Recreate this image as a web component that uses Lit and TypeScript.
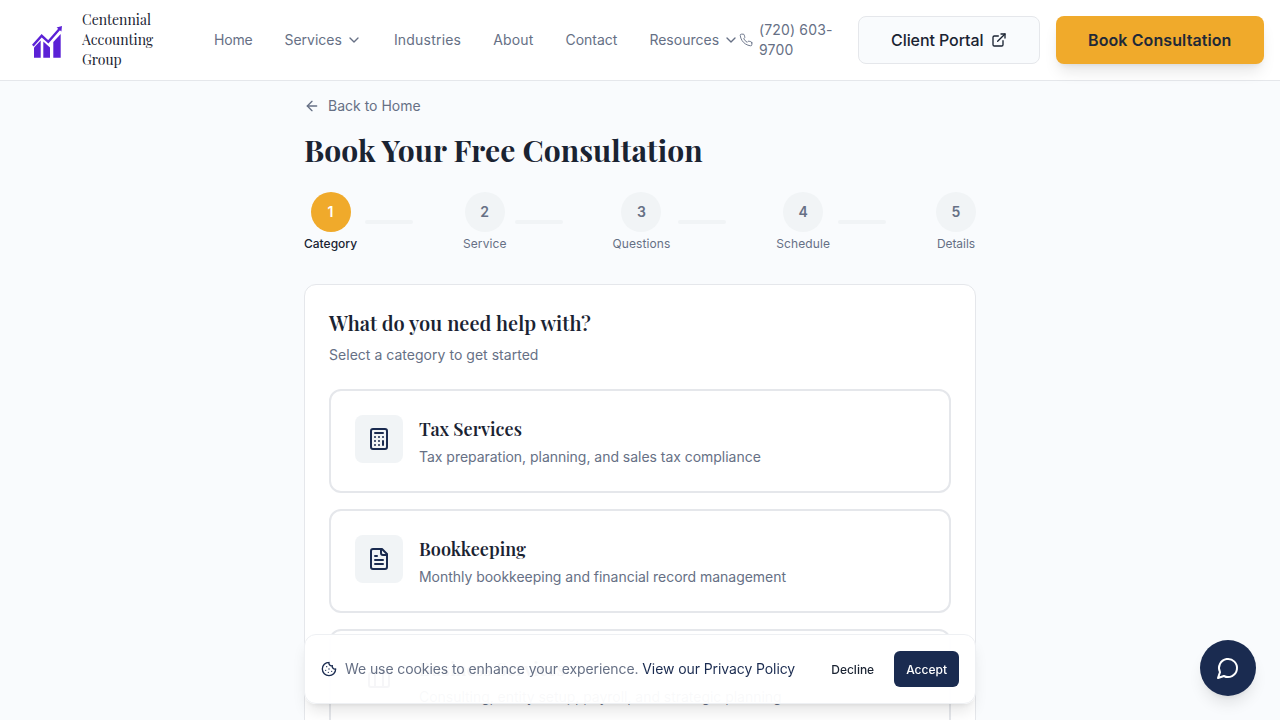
import { LitElement, html, css, svg } from "lit";
import { customElement } from "lit/decorators.js";

const icon = (paths: unknown, size = 16, sw = 2) => html`<svg class="ic" width=${size} height=${size} viewBox="0 0 24 24" fill="none" stroke="currentColor" stroke-width=${sw} stroke-linecap="round" stroke-linejoin="round">${paths}</svg>`;

const chevron = svg`<path d="m6 9 6 6 6-6"/>`;
const arrowLeft = svg`<path d="m12 19-7-7 7-7"/><path d="M19 12H5"/>`;
const phone = svg`<path d="M22 16.92v3a2 2 0 0 1-2.18 2 19.79 19.79 0 0 1-8.63-3.07 19.5 19.5 0 0 1-6-6 19.79 19.79 0 0 1-3.07-8.67A2 2 0 0 1 4.11 2h3a2 2 0 0 1 2 1.72 12.84 12.84 0 0 0 .7 2.81 2 2 0 0 1-.45 2.11L8.09 9.91a16 16 0 0 0 6 6l1.27-1.27a2 2 0 0 1 2.11-.45 12.84 12.84 0 0 0 2.81.7A2 2 0 0 1 22 16.92z"/>`;
const external = svg`<path d="M15 3h6v6"/><path d="M10 14 21 3"/><path d="M18 13v6a2 2 0 0 1-2 2H5a2 2 0 0 1-2-2V8a2 2 0 0 1 2-2h6"/>`;
const calculator = svg`<rect width="16" height="20" x="4" y="2" rx="2"/><line x1="8" x2="16" y1="6" y2="6"/><line x1="16" x2="16" y1="14" y2="18"/><path d="M16 10h.01"/><path d="M12 10h.01"/><path d="M8 10h.01"/><path d="M12 14h.01"/><path d="M8 14h.01"/><path d="M12 18h.01"/><path d="M8 18h.01"/>`;
const fileText = svg`<path d="M15 2H6a2 2 0 0 0-2 2v16a2 2 0 0 0 2 2h12a2 2 0 0 0 2-2V7Z"/><path d="M14 2v4a2 2 0 0 0 2 2h4"/><path d="M10 9H8"/><path d="M16 13H8"/><path d="M16 17H8"/>`;
const briefcase = svg`<path d="M16 20V4a2 2 0 0 0-2-2h-4a2 2 0 0 0-2 2v16"/><rect width="20" height="14" x="2" y="6" rx="2"/>`;
const cookie = svg`<path d="M12 2a10 10 0 1 0 10 10 4 4 0 0 1-5-5 4 4 0 0 1-5-5"/><path d="M8.5 8.5v.01"/><path d="M16 15.5v.01"/><path d="M12 12v.01"/><path d="M11 17v.01"/><path d="M7 14v.01"/>`;
const message = svg`<path d="M7.9 20A9 9 0 1 0 4 16.1L2 22Z"/>`;

const steps = ["Category", "Service", "Questions", "Schedule", "Details"];
const cards = [
  { t: "Tax Services", d: "Tax preparation, planning, and sales tax compliance", i: calculator },
  { t: "Bookkeeping", d: "Monthly bookkeeping and financial record management", i: fileText },
  { t: "Business Services", d: "Consulting, entity setup, payroll, and strategic planning", i: briefcase },
];
const nav = [
  { t: "Home", k: "tight" }, { t: "Services", c: 1, k: "" }, { t: "Industries", k: "wide" }, { t: "About", k: "mid" }, { t: "Contact", k: "" }, { t: "Resources", c: 1, k: "" },
];

@customElement("app-root")
export class AppRoot extends LitElement {
  static styles = css`
    :host { display: block; height: 100vh; overflow: hidden; background: #f9fbfd; font-family: Inter, "Liberation Sans", sans-serif; color: #1a2332; }
    * { box-sizing: border-box; }
    .ic { display: block; flex: none; }
    header { height: 81px; background: #fff; border-bottom: 1px solid #e5e7eb; display: flex; align-items: center; padding: 0 16px; }
    .logo { display: flex; align-items: center; gap: 20px; margin-left: 16px; flex: none; }
    .logo svg { display: block; }
    .logo-text { width: 100px; font-family: "Playfair Display", "Liberation Serif", serif; font-size: 14px; line-height: 20px; color: #1a2332; font-weight: 400; }
    nav { display: flex; align-items: center; gap: 32px; margin-left: 32px; flex: none; }
    .nl { display: flex; align-items: center; gap: 4px; font-size: 14px; line-height: 20px; color: #667085; font-weight: 400; white-space: nowrap; }
    .nl.tight { letter-spacing: -.2px; }
    .nl.wide { letter-spacing: .2px; }
    .nl.mid { letter-spacing: .15px; }
    .right { display: flex; align-items: center; margin-left: auto; }
    .phone { display: flex; align-items: center; gap: 6px; font-size: 14px; line-height: 20px; color: #667085; width: 96px; margin-right: 23px; letter-spacing: .15px; }
    .phone span { width: 76px; }
    .btn { height: 48px; border-radius: 8px; padding: 0 32px; display: flex; align-items: center; font-size: 16px; font-weight: 500; white-space: nowrap; }
    .portal { width: 182px; background: #f9fbfd; border: 1px solid #e5e7eb; gap: 8px; color: #1a2332; letter-spacing: -.08px; }
    .book { margin-left: 16px; width: 208px; background: #f0aa2b; color: #1f2937; font-weight: 600; letter-spacing: .1px; box-shadow: 0 10px 15px -3px rgba(0,0,0,.1), 0 4px 6px -4px rgba(0,0,0,.1); }
    main { width: 672px; margin: 0 auto; padding-top: 15px; }
    .back { display: flex; align-items: center; gap: 8px; font-size: 14px; line-height: 20px; color: #667085; margin-bottom: 16px; }
    h1 { margin: 0 0 24px; font-family: "Playfair Display", "Liberation Serif", serif; font-size: 30px; line-height: 36px; font-weight: 700; color: #1a2332; letter-spacing: .07px; }
    .stepper { display: flex; justify-content: space-between; margin-bottom: 32px; }
    .group { display: flex; align-items: center; }
    .step { display: flex; flex-direction: column; align-items: center; gap: 4px; }
    .circle { width: 40px; height: 40px; border-radius: 50%; background: #f1f4f6; color: #667085; display: flex; align-items: center; justify-content: center; font-size: 14px; line-height: 20px; font-weight: 600; }
    .circle.on { background: #f0aa2b; color: #fff; }
    .label { font-size: 12px; line-height: 16px; color: #667085; letter-spacing: .1px; }
    .label.on { color: #1a2332; font-weight: 500; letter-spacing: 0; }
    .label.last { letter-spacing: -.05px; }
    .line { width: 48px; height: 4px; border-radius: 2px; background: #f1f4f6; margin: 0 8px; }
    .panel { background: #fff; border: 1px solid #e5e7eb; border-radius: 12px; padding: 24px; }
    h2 { margin: 0 0 8px; font-family: "Playfair Display", "Liberation Serif", serif; font-size: 20px; line-height: 28px; font-weight: 600; color: #1a2332; letter-spacing: .04px; }
    .sub { margin: 0 0 24px; font-size: 14px; line-height: 20px; color: #667085; letter-spacing: .03px; }
    .cards { display: flex; flex-direction: column; gap: 16px; }
    .card { height: 104px; border: 2px solid #e5e7eb; border-radius: 12px; padding: 24px; display: flex; align-items: flex-start; gap: 16px; background: #fff; }
    .ibox { width: 48px; height: 48px; border-radius: 8px; background: #f1f4f6; color: #1a2b50; display: flex; align-items: center; justify-content: center; flex: none; }
    h3 { margin: 0 0 4px; font-family: "Playfair Display", "Liberation Serif", serif; font-size: 18px; line-height: 28px; font-weight: 600; color: #1a2332; letter-spacing: .04px; }
    .desc { margin: 0; font-size: 14px; line-height: 20px; color: #667085; letter-spacing: -.03px; }
    .banner { position: fixed; left: 304px; bottom: 16px; width: 672px; height: 70px; border: 1px solid #eef0f3; border-radius: 12px; background: rgba(255,255,255,.96); box-shadow: 0 10px 15px -3px rgba(0,0,0,.1), 0 4px 6px -4px rgba(0,0,0,.1); display: flex; align-items: center; padding: 0 16px; }
    .banner .ck { color: #1a2b50; margin-right: 8px; }
    .banner p { margin: 0; font-size: 14px; line-height: 20px; color: #667085; flex: 1; white-space: nowrap; letter-spacing: -.09px; }
    .banner p b { font-weight: 400; color: #1a2b50; }
    .sb { height: 36px; padding: 0 12px; border-radius: 6px; display: flex; align-items: center; font-size: 12px; font-weight: 500; color: #1a2332; }
    .sb.acc { background: #1a2b50; color: #fff; margin-left: 8px; }
    .chat { position: fixed; left: 1200px; top: 640px; width: 56px; height: 56px; border-radius: 50%; background: #1a2b50; color: #fff; display: flex; align-items: center; justify-content: center; box-shadow: 0 10px 15px -3px rgba(0,0,0,.1), 0 4px 6px -4px rgba(0,0,0,.1); }
  `;

  render() {
    return html`
      <header>
        <div class="logo">
          <svg width="30" height="40" viewBox="0 0 30 40" fill="#5b21d6">
            <path d="M2 27.5 L8.7 20.5 V37.7 H2 Z"/>
            <path d="M11.3 21.5 L18 27.5 V37.7 H11.3 Z"/>
            <path d="M21.3 22 L28.7 14 V37.7 H21.3 Z"/>
            <path d="M0.8 25.6 L9.7 15.8 L16.3 21.8 L27.5 9" fill="none" stroke="#5b21d6" stroke-width="2.4"/>
            <path d="M24.6 7.4 L30 6 L29.4 11.4 Z"/>
          </svg>
          <div class="logo-text">Centennial Accounting Group</div>
        </div>
        <nav>
          ${nav.map(n => html`<a class="nl ${n.k}">${n.t}${n.c ? icon(chevron) : ""}</a>`)}
        </nav>
        <div class="right">
          <div class="phone">${icon(phone, 14, 1.6)}<span>(720) 603-9700</span></div>
          <a class="btn portal">Client Portal ${icon(external)}</a>
          <a class="btn book">Book Consultation</a>
        </div>
      </header>
      <main>
        <a class="back">${icon(arrowLeft)}Back to Home</a>
        <h1>Book Your Free Consultation</h1>
        <div class="stepper">
          ${steps.map((s, i) => html`<div class="group">
            <div class="step">
              <div class="circle ${i === 0 ? "on" : ""}">${i + 1}</div>
              <div class="label ${i === 0 ? "on" : ""} ${i === 4 ? "last" : ""}">${s}</div>
            </div>
            ${i < 4 ? html`<div class="line"></div>` : ""}
          </div>`)}
        </div>
        <section class="panel">
          <h2>What do you need help with?</h2>
          <p class="sub">Select a category to get started</p>
          <div class="cards">
            ${cards.map(c => html`<div class="card">
              <div class="ibox">${icon(c.i, 24)}</div>
              <div><h3>${c.t}</h3><p class="desc">${c.d}</p></div>
            </div>`)}
          </div>
        </section>
      </main>
      <div class="banner">
        <span class="ck">${icon(cookie)}</span>
        <p>We use cookies to enhance your experience. <b>View our Privacy Policy</b></p>
        <a class="sb">Decline</a>
        <a class="sb acc">Accept</a>
      </div>
      <div class="chat">${icon(message, 24)}</div>
    `;
  }
}
